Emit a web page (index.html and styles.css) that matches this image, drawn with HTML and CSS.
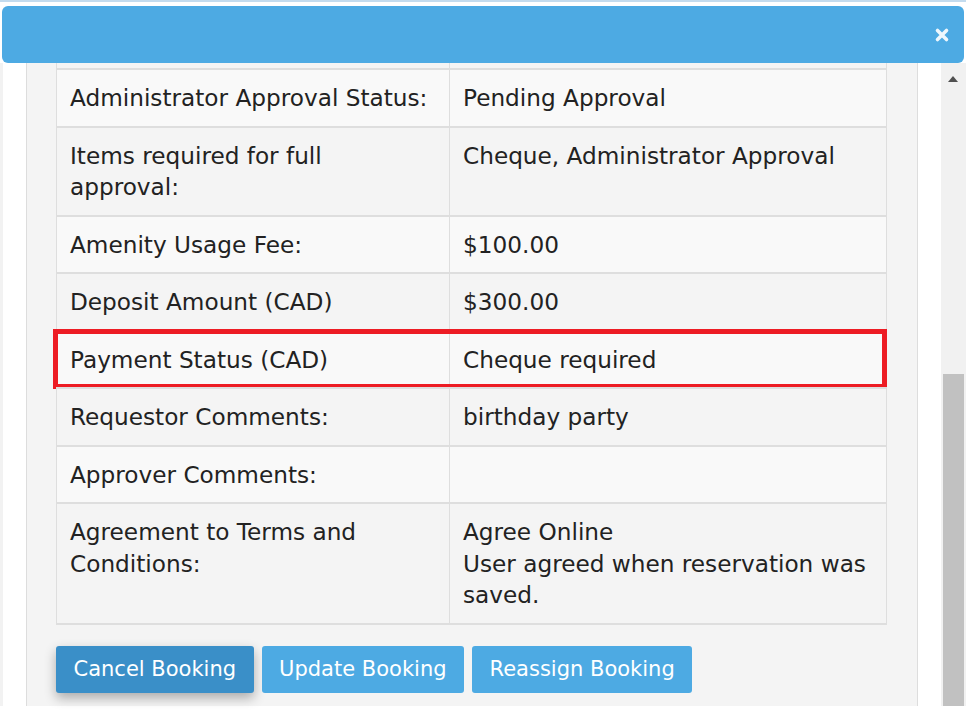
FILE: index.html
```html
<!DOCTYPE html>
<html>
<head>
<meta charset="utf-8">
<link rel="stylesheet" href="styles.css">
</head>
<body>
<div class="topline"></div>
<div class="modal-header">
  <svg class="close" width="16" height="16" viewBox="0 0 16 16"><path d="M3.5 3.5 L12.5 12.5 M12.5 3.5 L3.5 12.5" stroke="#eef7fd" stroke-width="3.6" stroke-linecap="round"/></svg>
</div>
<div class="frame">
  <div class="edge"></div>
  <div class="gutter"></div>
  <div class="panel">
    <div class="grid">
      <div class="row partial"><div class="cell"></div><div class="cell"></div></div>
      <div class="row light"><div class="cell">Administrator Approval Status:</div><div class="cell">Pending Approval</div></div>
      <div class="row"><div class="cell">Items required for full approval:</div><div class="cell">Cheque, Administrator Approval</div></div>
      <div class="row light"><div class="cell">Amenity Usage Fee:</div><div class="cell">$100.00</div></div>
      <div class="row"><div class="cell">Deposit Amount (CAD)</div><div class="cell">$300.00</div></div>
      <div class="row light highlight"><div class="cell">Payment Status (CAD)</div><div class="cell">Cheque required</div></div>
      <div class="row"><div class="cell">Requestor Comments:</div><div class="cell">birthday party</div></div>
      <div class="row light"><div class="cell">Approver Comments:</div><div class="cell"></div></div>
      <div class="row last"><div class="cell">Agreement to Terms and Conditions:</div><div class="cell">Agree Online<br>User agreed when reservation was saved.</div></div>
    </div>
    <div class="actions">
      <button class="btn btn-dark">Cancel Booking</button>
      <button class="btn">Update Booking</button>
      <button class="btn">Reassign Booking</button>
    </div>
  </div>
  <div class="gap"></div>
  <div class="scrollbar">
    <div class="arrow"></div>
    <div class="thumb"></div>
  </div>
</div>
</body>
</html>
```
FILE: styles.css
```css
* { box-sizing: border-box; }
html, body { margin: 0; padding: 0; background: #fff; }
body {
  font-family: "DejaVu Sans", Verdana, sans-serif;
  color: #222;
  width: 966px;
  height: 717px;
  overflow: hidden;
  position: relative;
}
.topline { height: 2px; background: #c3dbee; }
.modal-header {
  position: absolute;
  top: 6px;
  left: 2px;
  right: 2px;
  height: 57px;
  background: #4daae3;
  border-radius: 6px;
  z-index: 2;
  display: flex;
  align-items: center;
  justify-content: flex-end;
  padding-right: 14px;
}
.close { display: block; }
.frame {
  margin-top: 61px;
  height: 643px;
  display: flex;
}
.edge { width: 3px; background: #f2f2f2; }
.gutter { width: 23px; background: #fff; }
.panel {
  width: 892px;
  background: #f4f4f4;
  border-left: 1px solid #ddd;
  border-right: 1px solid #ddd;
  padding: 0 29px 0 29px;
}
.grid {
  width: 831px;
  font-size: 23.2px;
  line-height: 31.5px;
}
.row {
  display: grid;
  grid-template-columns: 393px 1fr;
  border-top: 2px solid #dedede;
  border-left: 1px solid #dedede;
  border-right: 1px solid #dedede;
  background: #f4f4f4;
  position: relative;
}
.row.light { background: #f9f9f9; }
.row.last { border-bottom: 2px solid #dedede; }
.row.partial { border-top: none; height: 5px; border-bottom: 0; }
.row.partial .cell { padding: 0; }
.cell {
  padding: 12px 12px 12px 13px;
}
.cell:first-child { border-right: 1px solid #dedede; }
.highlight::after {
  content: "";
  position: absolute;
  left: -4px;
  right: -1px;
  top: -3px;
  bottom: -2px;
  border: 5px solid #ed1c24;
  pointer-events: none;
}
.actions {
  display: flex;
  gap: 8px;
  margin-top: 21px;
}
.btn {
  font-family: "DejaVu Sans", Verdana, sans-serif;
  font-size: 21px;
  color: #fff;
  background: #4daae3;
  border: none;
  border-radius: 3px;
  height: 47px;
  padding: 0 17.5px;
  line-height: 47px;
}
.btn-dark {
  background: #3a8fc8;
  box-shadow: 0 5px 12px rgba(0,0,0,0.3);
}
.gap { width: 23px; background: #fff; }
.scrollbar {
  width: 25px;
  background: #f1f1f1;
  position: relative;
}
.arrow {
  position: absolute;
  top: 13px;
  left: 7px;
  width: 0; height: 0;
  border-left: 5.5px solid transparent;
  border-right: 5.5px solid transparent;
  border-bottom: 6px solid #505050;
}
.thumb {
  position: absolute;
  top: 311px;
  left: 2px;
  width: 21px;
  bottom: 0;
  background: #c1c1c1;
}
```
